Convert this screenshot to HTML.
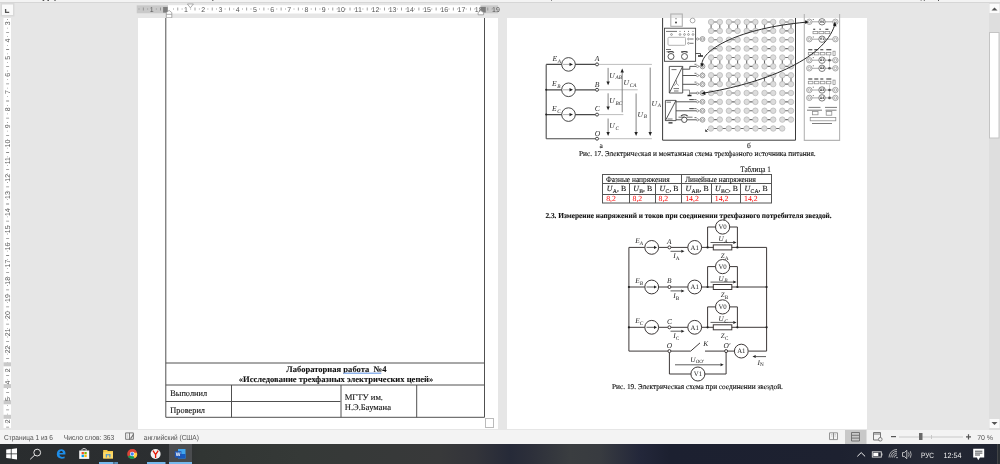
<!DOCTYPE html>
<html><head><meta charset="utf-8">
<style>
*{margin:0;padding:0;box-sizing:border-box}
html,body{width:1000px;height:464px;overflow:hidden;background:#e6e6e6;font-family:"Liberation Sans",sans-serif}
.abs{position:absolute}
svg{position:absolute;left:0;top:0;will-change:transform;text-rendering:geometricPrecision}
text[font-family^="Liberation Serif"],g[font-family^="Liberation Serif"] text{stroke:currentColor;stroke-width:0.1px}
g[style*="stroke:none"] text{stroke:none!important}
</style></head><body>
<!-- CHROME -->
<svg width="1000" height="464" viewBox="0 0 1000 464" font-family="Liberation Sans, sans-serif">
  <!-- top strip -->
  <rect x="0" y="0" width="1000" height="2" fill="#f3f3f3"/>
  <rect x="0" y="2" width="1000" height="1" fill="#d6d6d6"/>
  <rect x="42.6" y="0" width="1.6" height="1" fill="#555"/>
  <rect x="47.4" y="0" width="1.6" height="1" fill="#555"/>
  <rect x="54.2" y="0" width="1.6" height="1" fill="#777"/>
  <rect x="212" y="0" width="1.5" height="1" fill="#777"/>
  <rect x="920.6" y="0" width="1" height="1" fill="#888"/>
  <rect x="923.8" y="0" width="1" height="1" fill="#666"/>
  <rect x="938" y="0" width="1" height="1" fill="#555"/>
  <rect x="551" y="0" width="1" height="1" fill="#888"/>
  <!-- tab selector -->
  <rect x="0.5" y="3" width="14" height="13.5" fill="#d9d9d9"/>
  <rect x="2" y="4.5" width="11" height="10.5" fill="#fafafa"/>
  <path d="M5.6 9 V12.4 H9.2" fill="none" stroke="#555" stroke-width="1.3"/>
  <!-- hruler -->
<rect x="136.5" y="5.2" width="361.5" height="8.3" fill="#fff"/>
<rect x="136.5" y="5.2" width="31.5" height="8.3" fill="#c9c9c9"/>
<rect x="480.5" y="5.2" width="17.5" height="8.3" fill="#c9c9c9"/>
<path d="M138.6 8.6h0.8v0.8h-0.8z M142.9 7.5h0.8v3h-0.8z M147.3 8.6h0.8v0.8h-0.8z M155.9 8.6h0.8v0.8h-0.8z M160.2 7.5h0.8v3h-0.8z M164.5 8.6h0.8v0.8h-0.8z M173.1 8.6h0.8v0.8h-0.8z M177.4 7.5h0.8v3h-0.8z M181.7 8.6h0.8v0.8h-0.8z M190.3 8.6h0.8v0.8h-0.8z M194.6 7.5h0.8v3h-0.8z M198.9 8.6h0.8v0.8h-0.8z M207.5 8.6h0.8v0.8h-0.8z M211.8 7.5h0.8v3h-0.8z M216.1 8.6h0.8v0.8h-0.8z M224.7 8.6h0.8v0.8h-0.8z M229.1 7.5h0.8v3h-0.8z M233.4 8.6h0.8v0.8h-0.8z M242.0 8.6h0.8v0.8h-0.8z M246.3 7.5h0.8v3h-0.8z M250.6 8.6h0.8v0.8h-0.8z M259.2 8.6h0.8v0.8h-0.8z M263.5 7.5h0.8v3h-0.8z M267.8 8.6h0.8v0.8h-0.8z M276.4 8.6h0.8v0.8h-0.8z M280.7 7.5h0.8v3h-0.8z M285.0 8.6h0.8v0.8h-0.8z M293.6 8.6h0.8v0.8h-0.8z M297.9 7.5h0.8v3h-0.8z M302.2 8.6h0.8v0.8h-0.8z M310.8 8.6h0.8v0.8h-0.8z M315.1 7.5h0.8v3h-0.8z M319.5 8.6h0.8v0.8h-0.8z M328.1 8.6h0.8v0.8h-0.8z M332.4 7.5h0.8v3h-0.8z M336.7 8.6h0.8v0.8h-0.8z M345.3 8.6h0.8v0.8h-0.8z M349.6 7.5h0.8v3h-0.8z M353.9 8.6h0.8v0.8h-0.8z M362.5 8.6h0.8v0.8h-0.8z M366.8 7.5h0.8v3h-0.8z M371.1 8.6h0.8v0.8h-0.8z M379.7 8.6h0.8v0.8h-0.8z M384.0 7.5h0.8v3h-0.8z M388.3 8.6h0.8v0.8h-0.8z M396.9 8.6h0.8v0.8h-0.8z M401.2 7.5h0.8v3h-0.8z M405.6 8.6h0.8v0.8h-0.8z M414.2 8.6h0.8v0.8h-0.8z M418.5 7.5h0.8v3h-0.8z M422.8 8.6h0.8v0.8h-0.8z M431.4 8.6h0.8v0.8h-0.8z M435.7 7.5h0.8v3h-0.8z M440.0 8.6h0.8v0.8h-0.8z M448.6 8.6h0.8v0.8h-0.8z M452.9 7.5h0.8v3h-0.8z M457.2 8.6h0.8v0.8h-0.8z M465.8 8.6h0.8v0.8h-0.8z M470.1 7.5h0.8v3h-0.8z M474.4 8.6h0.8v0.8h-0.8z M483.0 8.6h0.8v0.8h-0.8z M487.4 7.5h0.8v3h-0.8z M491.7 8.6h0.8v0.8h-0.8z" fill="#8a8a8a"/>
<g font-size="7" fill="#555" text-anchor="middle"><text x="151.6" y="11.6">1</text><text x="186.0" y="11.6">1</text><text x="203.2" y="11.6">2</text><text x="220.4" y="11.6">3</text><text x="237.7" y="11.6">4</text><text x="254.9" y="11.6">5</text><text x="272.1" y="11.6">6</text><text x="289.3" y="11.6">7</text><text x="306.5" y="11.6">8</text><text x="323.8" y="11.6">9</text><text x="341.0" y="11.6">10</text><text x="358.2" y="11.6">11</text><text x="375.4" y="11.6">12</text><text x="392.6" y="11.6">13</text><text x="409.9" y="11.6">14</text><text x="427.1" y="11.6">15</text><text x="444.3" y="11.6">16</text><text x="461.5" y="11.6">17</text><text x="478.7" y="11.6">18</text><text x="496.0" y="11.6">19</text></g>
<!-- RMARK -->
<rect x="163.1" y="7" width="4.6" height="5.6" fill="#7d7d7d"/>
<rect x="480.5" y="6.9" width="5.3" height="5.6" fill="#7d7d7d"/>
<path d="M169.1 10.4 L171.8 12.6 V17.8 H166.3 V12.6Z M166.3 14.3 H171.8" fill="#fff" stroke="#8a8a8a" stroke-width="0.7"/>
<path d="M187.4 4 H193.4 L190.4 7.8Z" fill="#fff" stroke="#8a8a8a" stroke-width="0.7"/>
<path d="M480.8 10.6 L483.6 12.6 V14.8 H478.1 V12.6Z" fill="#fff" stroke="#8a8a8a" stroke-width="0.7"/>
<!-- /RMARK -->
<!-- vruler -->
<rect x="3.5" y="18" width="7.5" height="410" fill="#fff"/>
<path d="M7.2 19.1h0.8v0.8h-0.8z M7.2 27.7h0.8v0.8h-0.8z M6.1 32.0h3v0.8h-3z M7.2 36.3h0.8v0.8h-0.8z M7.2 44.9h0.8v0.8h-0.8z M6.1 49.1h3v0.8h-3z M7.2 53.4h0.8v0.8h-0.8z M7.2 62.0h0.8v0.8h-0.8z M6.1 66.3h3v0.8h-3z M7.2 70.6h0.8v0.8h-0.8z M7.2 79.2h0.8v0.8h-0.8z M6.1 83.5h3v0.8h-3z M7.2 87.8h0.8v0.8h-0.8z M7.2 96.3h0.8v0.8h-0.8z M6.1 100.6h3v0.8h-3z M7.2 104.9h0.8v0.8h-0.8z M7.2 113.5h0.8v0.8h-0.8z M6.1 117.8h3v0.8h-3z M7.2 122.1h0.8v0.8h-0.8z M7.2 130.7h0.8v0.8h-0.8z M6.1 134.9h3v0.8h-3z M7.2 139.2h0.8v0.8h-0.8z M7.2 147.8h0.8v0.8h-0.8z M6.1 152.1h3v0.8h-3z M7.2 156.4h0.8v0.8h-0.8z M7.2 165.0h0.8v0.8h-0.8z M6.1 169.3h3v0.8h-3z M7.2 173.5h0.8v0.8h-0.8z M7.2 182.1h0.8v0.8h-0.8z M6.1 186.4h3v0.8h-3z M7.2 190.7h0.8v0.8h-0.8z M7.2 199.3h0.8v0.8h-0.8z M6.1 203.6h3v0.8h-3z M7.2 207.9h0.8v0.8h-0.8z M7.2 216.4h0.8v0.8h-0.8z M6.1 220.7h3v0.8h-3z M7.2 225.0h0.8v0.8h-0.8z M7.2 233.6h0.8v0.8h-0.8z M6.1 237.9h3v0.8h-3z M7.2 242.2h0.8v0.8h-0.8z M7.2 250.8h0.8v0.8h-0.8z M6.1 255.1h3v0.8h-3z M7.2 259.3h0.8v0.8h-0.8z M7.2 267.9h0.8v0.8h-0.8z M6.1 272.2h3v0.8h-3z M7.2 276.5h0.8v0.8h-0.8z M7.2 285.1h0.8v0.8h-0.8z M6.1 289.4h3v0.8h-3z M7.2 293.7h0.8v0.8h-0.8z M7.2 302.3h0.8v0.8h-0.8z M6.1 306.5h3v0.8h-3z M7.2 310.8h0.8v0.8h-0.8z M7.2 319.4h0.8v0.8h-0.8z M6.1 323.7h3v0.8h-3z M7.2 328.0h0.8v0.8h-0.8z M7.2 336.6h0.8v0.8h-0.8z M6.1 340.9h3v0.8h-3z M7.2 345.2h0.8v0.8h-0.8z M7.2 353.7h0.8v0.8h-0.8z M6.1 358.0h3v0.8h-3z M7.2 362.3h0.8v0.8h-0.8z M7.2 370.9h0.8v0.8h-0.8z M6.1 375.2h3v0.8h-3z M7.2 379.5h0.8v0.8h-0.8z M7.2 388.1h0.8v0.8h-0.8z M6.1 392.3h3v0.8h-3z M7.2 396.6h0.8v0.8h-0.8z M7.2 405.2h0.8v0.8h-0.8z M6.1 409.5h3v0.8h-3z M7.2 413.8h0.8v0.8h-0.8z M7.2 422.4h0.8v0.8h-0.8z M6.1 426.7h3v0.8h-3z" fill="#8a8a8a"/>
<g font-size="7" fill="#555" text-anchor="middle"><text transform="translate(10.2 23.4) rotate(-90)">3</text><text transform="translate(10.2 40.6) rotate(-90)">4</text><text transform="translate(10.2 57.7) rotate(-90)">5</text><text transform="translate(10.2 74.9) rotate(-90)">6</text><text transform="translate(10.2 92.0) rotate(-90)">7</text><text transform="translate(10.2 109.2) rotate(-90)">8</text><text transform="translate(10.2 126.4) rotate(-90)">9</text><text transform="translate(10.2 143.5) rotate(-90)">10</text><text transform="translate(10.2 160.7) rotate(-90)">11</text><text transform="translate(10.2 177.8) rotate(-90)">12</text><text transform="translate(10.2 195.0) rotate(-90)">13</text><text transform="translate(10.2 212.2) rotate(-90)">14</text><text transform="translate(10.2 229.3) rotate(-90)">15</text><text transform="translate(10.2 246.5) rotate(-90)">16</text><text transform="translate(10.2 263.6) rotate(-90)">17</text><text transform="translate(10.2 280.8) rotate(-90)">18</text><text transform="translate(10.2 298.0) rotate(-90)">19</text><text transform="translate(10.2 315.1) rotate(-90)">20</text><text transform="translate(10.2 332.3) rotate(-90)">21</text><text transform="translate(10.2 349.4) rotate(-90)">22</text></g>

<!-- VBLK -->
<g fill="#c9c9c9"><rect x="3.5" y="362.3" width="7.5" height="4"/><rect x="3.5" y="384.1" width="7.5" height="4"/><rect x="3.5" y="400.2" width="7.5" height="4.1"/><rect x="3.5" y="414.8" width="7.5" height="4"/></g>
<g font-size="7" fill="#555" text-anchor="middle"><text transform="translate(10.2 370.3) rotate(-90)">2</text><text transform="translate(10.2 399.1) rotate(-90)">5</text><text transform="translate(10.2 421.2) rotate(-90)">2</text><text transform="translate(10.2 382.5) rotate(-90)">4</text></g>
<!-- /VBLK -->
  <!-- scrollbar -->
  <rect x="989" y="3" width="11" height="427" fill="#dedede"/>
  <rect x="989.5" y="4" width="10" height="9" fill="#fbfbfb"/>
  <path d="M991.5 10.5 L994.5 7.5 L997.5 10.5Z" fill="#555"/>
  <rect x="989.5" y="32.5" width="9.5" height="105.5" fill="#fff" stroke="#c4c4c4" stroke-width="1"/>
  <rect x="989.5" y="419" width="10" height="9" fill="#fbfbfb"/>
  <path d="M991.5 422 L994.5 425 L997.5 422Z" fill="#555"/>

<!-- PAGE 1 -->
<rect x="138" y="18" width="360" height="411" fill="#fff"/>
<g fill="none" stroke="#505050" stroke-width="1">
  <path d="M165.8 18 V417.3 H484.5 V18"/>
  <path d="M165.8 363 H484.5 M165.8 385 H484.5 M165.8 401.5 H340.5"/>
  <path d="M231.5 385 V417.3 M341 385 V417.3 M416.7 385 V417.3"/>
</g>
<rect x="485.5" y="418.5" width="8" height="9" fill="#fff" stroke="#bbb" stroke-width="1"/>
<g font-family="Liberation Serif, serif" fill="#111">
  <text x="286.3" y="371.8" font-size="8.6" font-weight="bold" textLength="100.2" lengthAdjust="spacingAndGlyphs">Лабораторная работа&#160;&#160;№4</text>
  <text x="238.8" y="381.9" font-size="8.6" font-weight="bold" textLength="194.5" lengthAdjust="spacingAndGlyphs">«Исследование трехфазных электрических цепей»</text>
  <text x="170.3" y="396.3" font-size="8.6" textLength="36.8" lengthAdjust="spacingAndGlyphs">Выполнил</text>
  <text x="170.3" y="412.7" font-size="8.6" textLength="34.7" lengthAdjust="spacingAndGlyphs">Проверил</text>
  <text x="344.7" y="400" font-size="8.6">МГТУ им.</text>
  <text x="344.7" y="409.8" font-size="8.6">Н.Э.Баумана</text>
</g>
<path d="M343.4 373.3 H381.3" stroke="#8fb4ec" stroke-width="1.5"/>
<!-- PAGE 2 -->
<rect x="507" y="18" width="360" height="411" fill="#fff"/>
<!-- FIG 17a -->
<g fill="none" stroke-linecap="butt">
  <path d="M546.2 64.4 V138.7" stroke="#555" stroke-width="1.15"/>
  <path d="M546.2 64.4 H561.7 M575.3 64.4 H595.4 M546.2 89.8 H561.7 M575.3 89.8 H595.4 M546.2 114.6 H561.7 M575.3 114.6 H595.4 M546.2 138.7 H595.4" stroke="#484848" stroke-width="1.15"/>
  <path d="M598.6 64.4 H651.9 M598.6 89.8 H637.7 M598.6 114.6 H623.4 M598.6 138.7 H651.9" stroke="#bdbdbd" stroke-width="1"/>
  <g stroke="#333" stroke-width="0.9">
    <circle cx="568.5" cy="64.4" r="6.8"/>
    <circle cx="568.5" cy="89.8" r="6.8"/>
    <circle cx="568.5" cy="114.6" r="6.8"/>
  </g>
  <g stroke="#999" stroke-width="0.8">
    <path d="M563 64.4 H570 M563 89.8 H570 M563 114.6 H570"/>
  </g>
  <g stroke="#333" stroke-width="0.9" fill="#fff">
    <circle cx="597" cy="64.4" r="1.5"/>
    <circle cx="597" cy="89.8" r="1.5"/>
    <circle cx="597" cy="114.6" r="1.5"/>
    <circle cx="597" cy="138.7" r="1.5"/>
  </g>
  <g stroke="#777" stroke-width="0.9">
    <path d="M608.1 67.9 V83 M608.1 93.3 V108 M608.1 118.5 V133.5 M622.2 71 V112.3 M636.1 93.5 V133.5 M650.2 67.6 V133.5"/>
  </g>
</g>
<g fill="#222">
  <path d="M569.5 62.7 L573 64.4 L569.5 66.1Z M569.5 88.1 L573 89.8 L569.5 91.5Z M569.5 112.9 L573 114.6 L569.5 116.3Z"/>
  <path d="M606.4 81.4 L609.8 81.4 L608.1 85.3Z M606.4 106.4 L609.8 106.4 L608.1 110.3Z M606.4 132 L609.8 132 L608.1 135.9Z M634.4 132 L637.8 132 L636.1 135.9Z M648.5 132 L651.9 132 L650.2 135.9Z M620.5 72.4 L623.9 72.4 L622.2 68.5Z"/>
  <circle cx="546.2" cy="89.8" r="1"/>
  <circle cx="546.2" cy="114.6" r="1"/>
</g>
<g font-family="Liberation Serif, serif" font-style="italic" fill="#2a2a2a" style="stroke:none">
  <text x="552.5" y="61" font-size="7.6">E<tspan font-size="5.2" dy="1.9" dx="0.7">A</tspan></text>
  <text x="552" y="86.2" font-size="7.6">E<tspan font-size="5.2" dy="1.9" dx="0.7">B</tspan></text>
  <text x="552" y="111" font-size="7.6">E<tspan font-size="5.2" dy="1.9" dx="0.7">C</tspan></text>
  <text x="594.8" y="61.2" font-size="7.6">A</text>
  <text x="594.8" y="86.6" font-size="7.6">B</text>
  <text x="594.8" y="111.4" font-size="7.6">C</text>
  <text x="594.8" y="135.5" font-size="7.6">O</text>
  <text x="609.3" y="77.5" font-size="7.6">U<tspan font-size="5.2" dy="1.9" dx="0.7">AB</tspan></text>
  <text x="623.5" y="85" font-size="7.6">U<tspan font-size="5.2" dy="1.9" dx="0.7">CA</tspan></text>
  <text x="609.3" y="102.8" font-size="7.6">U<tspan font-size="5.2" dy="1.9" dx="0.7">BC</tspan></text>
  <text x="609.3" y="127.6" font-size="7.6">U<tspan font-size="5.2" dy="1.9" dx="0.7">C</tspan></text>
  <text x="637.5" y="116.5" font-size="7.6">U<tspan font-size="5.2" dy="1.9" dx="0.7">B</tspan></text>
  <text x="651.5" y="105.5" font-size="7.6">U<tspan font-size="5.2" dy="1.9" dx="0.7">A</tspan></text>
</g>
<text x="599.5" y="148" font-family="Liberation Serif, serif" font-size="7.5" fill="#222">а</text>
<!-- FIG17B -->
<g fill="none">
<path d="M662.6 18 V140.2 H795.5 V18" stroke="#3a3a3a" stroke-width="1"/>
<path d="M711.10 22.00H719.80V30.88H711.10Z M728.90 22.00H737.60V30.88H728.90Z M746.70 22.00H755.40V30.88H746.70Z M764.50 22.00H773.20V30.88H764.50Z M782.30 22.00H791.00V30.88H782.30Z M711.10 39.75H719.80 M728.90 39.75H737.60 M746.70 39.75H755.40 M764.50 39.75H773.20 M782.30 39.75H791.00 M711.10 48.62H719.80 M728.90 48.62H737.60 M746.70 48.62H755.40 M764.50 48.62H773.20 M782.30 48.62H791.00 M711.10 57.50H719.80V66.38H711.10Z M728.90 57.50H737.60V66.38H728.90Z M746.70 57.50H755.40V66.38H746.70Z M764.50 57.50H773.20V66.38H764.50Z M782.30 57.50H791.00V66.38H782.30Z M711.10 75.25H719.80V84.12H711.10Z M728.90 75.25H737.60V84.12H728.90Z M746.70 75.25H755.40V84.12H746.70Z M764.50 75.25H773.20V84.12H764.50Z M782.30 75.25H791.00V84.12H782.30Z M711.10 93.00H719.80 M728.90 93.00H737.60 M746.70 93.00H755.40 M764.50 93.00H773.20 M782.30 93.00H791.00 M711.10 101.88H719.80 M728.90 101.88H737.60 M746.70 101.88H755.40 M764.50 101.88H773.20 M782.30 101.88H791.00 M711.10 110.75H719.80 M728.90 110.75H737.60 M746.70 110.75H755.40 M764.50 110.75H773.20 M782.30 110.75H791.00 M711.10 119.62H719.80 M728.90 119.62H737.60 M746.70 119.62H755.40 M764.50 119.62H773.20 M782.30 119.62H791.00 M710.90 128.50H782.18" stroke="#6a6a6a" stroke-width="1.1"/>
<g fill="#dcdcdc" stroke="#b5b5b5" stroke-width="0.7"><circle cx="711.10" cy="22.00" r="2.75"/><circle cx="711.10" cy="30.88" r="2.75"/><circle cx="719.80" cy="22.00" r="2.75"/><circle cx="719.80" cy="30.88" r="2.75"/><circle cx="728.90" cy="22.00" r="2.75"/><circle cx="728.90" cy="30.88" r="2.75"/><circle cx="737.60" cy="22.00" r="2.75"/><circle cx="737.60" cy="30.88" r="2.75"/><circle cx="746.70" cy="22.00" r="2.75"/><circle cx="746.70" cy="30.88" r="2.75"/><circle cx="755.40" cy="22.00" r="2.75"/><circle cx="755.40" cy="30.88" r="2.75"/><circle cx="764.50" cy="22.00" r="2.75"/><circle cx="764.50" cy="30.88" r="2.75"/><circle cx="773.20" cy="22.00" r="2.75"/><circle cx="773.20" cy="30.88" r="2.75"/><circle cx="782.30" cy="22.00" r="2.75"/><circle cx="782.30" cy="30.88" r="2.75"/><circle cx="791.00" cy="22.00" r="2.75"/><circle cx="791.00" cy="30.88" r="2.75"/><circle cx="711.10" cy="39.75" r="2.75"/><circle cx="719.80" cy="39.75" r="2.75"/><circle cx="728.90" cy="39.75" r="2.75"/><circle cx="737.60" cy="39.75" r="2.75"/><circle cx="746.70" cy="39.75" r="2.75"/><circle cx="755.40" cy="39.75" r="2.75"/><circle cx="764.50" cy="39.75" r="2.75"/><circle cx="773.20" cy="39.75" r="2.75"/><circle cx="782.30" cy="39.75" r="2.75"/><circle cx="791.00" cy="39.75" r="2.75"/><circle cx="711.10" cy="48.62" r="2.75"/><circle cx="719.80" cy="48.62" r="2.75"/><circle cx="728.90" cy="48.62" r="2.75"/><circle cx="737.60" cy="48.62" r="2.75"/><circle cx="746.70" cy="48.62" r="2.75"/><circle cx="755.40" cy="48.62" r="2.75"/><circle cx="764.50" cy="48.62" r="2.75"/><circle cx="773.20" cy="48.62" r="2.75"/><circle cx="782.30" cy="48.62" r="2.75"/><circle cx="791.00" cy="48.62" r="2.75"/><circle cx="711.10" cy="57.50" r="2.75"/><circle cx="711.10" cy="66.38" r="2.75"/><circle cx="719.80" cy="57.50" r="2.75"/><circle cx="719.80" cy="66.38" r="2.75"/><circle cx="728.90" cy="57.50" r="2.75"/><circle cx="728.90" cy="66.38" r="2.75"/><circle cx="737.60" cy="57.50" r="2.75"/><circle cx="737.60" cy="66.38" r="2.75"/><circle cx="746.70" cy="57.50" r="2.75"/><circle cx="746.70" cy="66.38" r="2.75"/><circle cx="755.40" cy="57.50" r="2.75"/><circle cx="755.40" cy="66.38" r="2.75"/><circle cx="764.50" cy="57.50" r="2.75"/><circle cx="764.50" cy="66.38" r="2.75"/><circle cx="773.20" cy="57.50" r="2.75"/><circle cx="773.20" cy="66.38" r="2.75"/><circle cx="782.30" cy="57.50" r="2.75"/><circle cx="782.30" cy="66.38" r="2.75"/><circle cx="791.00" cy="57.50" r="2.75"/><circle cx="791.00" cy="66.38" r="2.75"/><circle cx="711.10" cy="75.25" r="2.75"/><circle cx="711.10" cy="84.12" r="2.75"/><circle cx="719.80" cy="75.25" r="2.75"/><circle cx="719.80" cy="84.12" r="2.75"/><circle cx="728.90" cy="75.25" r="2.75"/><circle cx="728.90" cy="84.12" r="2.75"/><circle cx="737.60" cy="75.25" r="2.75"/><circle cx="737.60" cy="84.12" r="2.75"/><circle cx="746.70" cy="75.25" r="2.75"/><circle cx="746.70" cy="84.12" r="2.75"/><circle cx="755.40" cy="75.25" r="2.75"/><circle cx="755.40" cy="84.12" r="2.75"/><circle cx="764.50" cy="75.25" r="2.75"/><circle cx="764.50" cy="84.12" r="2.75"/><circle cx="773.20" cy="75.25" r="2.75"/><circle cx="773.20" cy="84.12" r="2.75"/><circle cx="782.30" cy="75.25" r="2.75"/><circle cx="782.30" cy="84.12" r="2.75"/><circle cx="791.00" cy="75.25" r="2.75"/><circle cx="791.00" cy="84.12" r="2.75"/><circle cx="711.10" cy="93.00" r="2.75"/><circle cx="719.80" cy="93.00" r="2.75"/><circle cx="728.90" cy="93.00" r="2.75"/><circle cx="737.60" cy="93.00" r="2.75"/><circle cx="746.70" cy="93.00" r="2.75"/><circle cx="755.40" cy="93.00" r="2.75"/><circle cx="764.50" cy="93.00" r="2.75"/><circle cx="773.20" cy="93.00" r="2.75"/><circle cx="782.30" cy="93.00" r="2.75"/><circle cx="791.00" cy="93.00" r="2.75"/><circle cx="711.10" cy="101.88" r="2.75"/><circle cx="719.80" cy="101.88" r="2.75"/><circle cx="728.90" cy="101.88" r="2.75"/><circle cx="737.60" cy="101.88" r="2.75"/><circle cx="746.70" cy="101.88" r="2.75"/><circle cx="755.40" cy="101.88" r="2.75"/><circle cx="764.50" cy="101.88" r="2.75"/><circle cx="773.20" cy="101.88" r="2.75"/><circle cx="782.30" cy="101.88" r="2.75"/><circle cx="791.00" cy="101.88" r="2.75"/><circle cx="711.10" cy="110.75" r="2.75"/><circle cx="719.80" cy="110.75" r="2.75"/><circle cx="728.90" cy="110.75" r="2.75"/><circle cx="737.60" cy="110.75" r="2.75"/><circle cx="746.70" cy="110.75" r="2.75"/><circle cx="755.40" cy="110.75" r="2.75"/><circle cx="764.50" cy="110.75" r="2.75"/><circle cx="773.20" cy="110.75" r="2.75"/><circle cx="782.30" cy="110.75" r="2.75"/><circle cx="791.00" cy="110.75" r="2.75"/><circle cx="711.10" cy="119.62" r="2.75"/><circle cx="719.80" cy="119.62" r="2.75"/><circle cx="728.90" cy="119.62" r="2.75"/><circle cx="737.60" cy="119.62" r="2.75"/><circle cx="746.70" cy="119.62" r="2.75"/><circle cx="755.40" cy="119.62" r="2.75"/><circle cx="764.50" cy="119.62" r="2.75"/><circle cx="773.20" cy="119.62" r="2.75"/><circle cx="782.30" cy="119.62" r="2.75"/><circle cx="791.00" cy="119.62" r="2.75"/><circle cx="710.90" cy="128.50" r="2.75"/><circle cx="719.81" cy="128.50" r="2.75"/><circle cx="728.72" cy="128.50" r="2.75"/><circle cx="737.63" cy="128.50" r="2.75"/><circle cx="746.54" cy="128.50" r="2.75"/><circle cx="755.45" cy="128.50" r="2.75"/><circle cx="764.36" cy="128.50" r="2.75"/><circle cx="773.27" cy="128.50" r="2.75"/><circle cx="782.18" cy="128.50" r="2.75"/></g>
</g>
<g fill="none" stroke="#444" stroke-width="0.9">
  <rect x="664.5" y="28.2" width="31.1" height="33.1"/>
  <path d="M669.3 93 V66.4 H682.7 V93 Z M669.3 93 L682.7 66.4"/>
  <path d="M665.4 120.6 V100.4 H676 V120.6 Z M665.4 120.6 L676 100.4"/>
  <path d="M682.7 69.2 H689.8 V66.4 H696.3 M682.7 75.5 H696.3 M682.7 84.3 H696.3 M689.5 93.1 H699.5 M695.6 53.5 H700.5 V56"/>
  <path d="M676 101.8 H696.3 M676 110.8 H696.3 M676 119.8 H681.6 M687 119.8 H696.3"/>
  <circle cx="671" cy="56.5" r="3"/><circle cx="684.5" cy="56.5" r="3"/>
  <circle cx="684.3" cy="119.8" r="2.7"/>
  <path d="M668 52.5 Q671 50.5 674 52.5 M681.5 52.5 Q684.5 50.5 687.5 52.5 M681 116 Q684.3 113.5 687.6 116" stroke-width="1.2"/>
</g>
<g fill="none" stroke="#777" stroke-width="0.8">
  <path d="M682.7 90 H689.5 V95"/>
</g>
<path d="M698 56 H703 M687.5 95.5 H691.5 M668.5 122.8 H672.5" stroke="#222" stroke-width="1.3"/>
<g fill="none" stroke="#aaa" stroke-width="0.9">
  <rect x="670.8" y="14" width="11.5" height="12.3" stroke="#b0b0b0" stroke-width="1.1"/>
  <circle cx="692.6" cy="20.5" r="2.4" stroke-width="1"/>
  <rect x="668" y="37.3" width="17.5" height="8" rx="1"/>
</g>
<g fill="#fff" stroke="#666" stroke-width="0.6">
  <circle cx="671.5" cy="34.5" r="0.9"/><circle cx="680" cy="34.5" r="0.9"/><circle cx="684.5" cy="34.5" r="0.9"/><circle cx="688.5" cy="34.5" r="0.9"/><circle cx="693" cy="34.5" r="0.9"/>
  <circle cx="688.5" cy="39" r="0.9"/><circle cx="688.5" cy="43.3" r="0.9"/>
</g>
<path d="M666 31.4 H677 M679.5 31.4h1 M684 31.4h1 M688 31.4h1 M692.5 31.4h1 M690 39h3.5 M690 43.3h3.5 M666 49.5h5 M666.5 51.7h6.5 M681 51.7h6.5 M690 99.6h4.5 M690 108.6h4.5 M678.5 117.2h6 M686.5 117.2h6 M671.5 69.6h5 M673.5 88.6h5.5 M674 91h4.5 M666.5 102.2h4.5 M689 99.6h4.5 M689 108.6h4.5 M694.5 64.3h2 M694.5 73.3h2 M694.5 82.1h2 M694.5 99.6h2 M694.5 108.6h2 M694.5 117.6h2 M701.8 91h1 M701.8 73h1 M701.8 81.8h1 M667.5 119h5" stroke="#444" stroke-width="0.75"/><path d="M676.5 80.3 V83.4 L674.2 85.6 M676.5 83.4 L678.8 85.6" fill="none" stroke="#555" stroke-width="0.6"/>
<circle cx="676" cy="22.5" r="0.9" fill="#333"/><path d="M676 18 v1.3" stroke="#333" stroke-width="0.7"/>

<g fill="#fff" stroke="#7a7a7a" stroke-width="0.75"><circle cx="697.5" cy="39" r="1.1"/><circle cx="702.5" cy="39" r="2.4"/><circle cx="702.5" cy="39" r="1.1" stroke-width="0.6"/><circle cx="697.5" cy="66.4" r="1.1"/><circle cx="702.5" cy="66.4" r="2.4"/><circle cx="702.5" cy="66.4" r="1.1" stroke-width="0.6"/><circle cx="697.5" cy="75.5" r="1.1"/><circle cx="702.5" cy="75.5" r="2.4"/><circle cx="702.5" cy="75.5" r="1.1" stroke-width="0.6"/><circle cx="697.5" cy="84.3" r="1.1"/><circle cx="702.5" cy="84.3" r="2.4"/><circle cx="702.5" cy="84.3" r="1.1" stroke-width="0.6"/><circle cx="697.5" cy="93.1" r="1.1"/><circle cx="702.5" cy="93.1" r="2.4"/><circle cx="702.5" cy="93.1" r="1.1" stroke-width="0.6"/><circle cx="697.5" cy="101.8" r="1.1"/><circle cx="702.5" cy="101.8" r="2.4"/><circle cx="702.5" cy="101.8" r="1.1" stroke-width="0.6"/><circle cx="697.5" cy="110.8" r="1.1"/><circle cx="702.5" cy="110.8" r="2.4"/><circle cx="702.5" cy="110.8" r="1.1" stroke-width="0.6"/><circle cx="697.5" cy="119.8" r="1.1"/><circle cx="702.5" cy="119.8" r="2.4"/><circle cx="702.5" cy="119.8" r="1.1" stroke-width="0.6"/></g>
<path d="M698.6 39 H700.1 M698.6 66.4 H700.1 M698.6 75.5 H700.1 M698.6 84.3 H700.1 M698.6 101.8 H700.1 M698.6 110.8 H700.1 M698.6 119.8 H700.1" stroke="#888" stroke-width="0.6"/>
<path d="M804.3 14 V140.4 H839.6 V14" fill="none" stroke="#b4b4b4" stroke-width="1.1"/>
<g fill="none" stroke="#8a8a8a" stroke-width="0.75"><path d="M812 21.8H818.8 M825.2 21.8H832.7"/><circle cx="809.3" cy="21.8" r="2.7"/><circle cx="809.3" cy="21.8" r="1.3" stroke-width="0.6"/><circle cx="835.4" cy="21.8" r="2.7"/><circle cx="835.4" cy="21.8" r="1.3" stroke-width="0.6"/><circle cx="822" cy="21.8" r="3.2" stroke="#606060" stroke-width="0.8"/><path d="M812 39.2H818.8 M825.2 39.2H832.7"/><circle cx="809.3" cy="39.2" r="2.7"/><circle cx="809.3" cy="39.2" r="1.3" stroke-width="0.6"/><circle cx="835.4" cy="39.2" r="2.7"/><circle cx="835.4" cy="39.2" r="1.3" stroke-width="0.6"/><circle cx="822" cy="39.2" r="3.2" stroke="#606060" stroke-width="0.8"/><path d="M812 60.2H818.8 M825.2 60.2H832.7"/><circle cx="809.3" cy="60.2" r="2.7"/><circle cx="809.3" cy="60.2" r="1.3" stroke-width="0.6"/><circle cx="835.4" cy="60.2" r="2.7"/><circle cx="835.4" cy="60.2" r="1.3" stroke-width="0.6"/><circle cx="822" cy="60.2" r="3.2" stroke="#606060" stroke-width="0.8"/><path d="M812 68.3H818.8 M825.2 68.3H832.7"/><circle cx="809.3" cy="68.3" r="2.7"/><circle cx="809.3" cy="68.3" r="1.3" stroke-width="0.6"/><circle cx="835.4" cy="68.3" r="2.7"/><circle cx="835.4" cy="68.3" r="1.3" stroke-width="0.6"/><circle cx="822" cy="68.3" r="3.2" stroke="#606060" stroke-width="0.8"/><path d="M812 90H818.8 M825.2 90H832.7"/><circle cx="809.3" cy="90" r="2.7"/><circle cx="809.3" cy="90" r="1.3" stroke-width="0.6"/><circle cx="835.4" cy="90" r="2.7"/><circle cx="835.4" cy="90" r="1.3" stroke-width="0.6"/><circle cx="822" cy="90" r="3.2" stroke="#606060" stroke-width="0.8"/><path d="M812 97.9H818.8 M825.2 97.9H832.7"/><circle cx="809.3" cy="97.9" r="2.7"/><circle cx="809.3" cy="97.9" r="1.3" stroke-width="0.6"/><circle cx="835.4" cy="97.9" r="2.7"/><circle cx="835.4" cy="97.9" r="1.3" stroke-width="0.6"/><circle cx="822" cy="97.9" r="3.2" stroke="#606060" stroke-width="0.8"/><path d="M829.5 55 V68.3 M829.5 84.5 V98.1" stroke="#aaa" stroke-width="0.6"/><rect x="813" y="31.6" width="4.8" height="2.1"/><rect x="819" y="31.6" width="4.8" height="2.1"/><rect x="825" y="31.6" width="4.8" height="2.1"/><rect x="808.3" y="52.4" width="4.6" height="2.5"/><rect x="814.3" y="52.4" width="4.6" height="2.5"/><rect x="820.3" y="52.4" width="4.6" height="2.5"/><rect x="826.3" y="52.4" width="4.6" height="2.5"/><rect x="833" y="51.199999999999996" width="2.1" height="4.4"/><rect x="808.3" y="81.3" width="4.6" height="2.5"/><rect x="814.3" y="81.3" width="4.6" height="2.5"/><rect x="820.3" y="81.3" width="4.6" height="2.5"/><rect x="826.3" y="81.3" width="4.6" height="2.5"/><rect x="833" y="80.1" width="2.1" height="4.4"/><rect x="812.6" y="111.6" width="5.4" height="3.2"/><rect x="826.2" y="111.6" width="5.6" height="3.6"/><rect x="810.2" y="117.4" width="25.6" height="3.4"/></g>
<g fill="#555"><circle cx="829.5" cy="60.2" r="1.3"/><circle cx="829.5" cy="68.3" r="1.3"/><circle cx="829.5" cy="90" r="1.3"/><circle cx="829.5" cy="97.9" r="1.3"/></g>
<g font-family="Liberation Sans, sans-serif" font-size="3.6" font-weight="bold" fill="#222" text-anchor="middle"><text x="822" y="22.900000000000002">V0</text><text x="822" y="40.300000000000004">V1</text><text x="822" y="61.300000000000004">A1</text><text x="822" y="69.39999999999999">A2</text><text x="822" y="91.1">A3</text><text x="822" y="99.0">A4</text></g>
<path d="M813.2 29.3h2 M819.4 29.3h1.4 M825.4 29.3h3 M808.3 49.8h4 M814.3 49.8h4 M820.3 49.8h3 M826.3 49.8h5 M808.3 79h4 M814.3 79h4 M820.3 79h3 M826.3 79h5" stroke="#2a2a2a" stroke-width="1.1"/>
<path d=" M808.5 107.4h12 M825 107.4h12 M807 110.2h15 M825.5 110.2h11 M812 123.5h20" stroke="#444" stroke-width="0.7"/>
<path d="M812.8 19.5h1 M812.8 37h1 M812.8 57.6h1 M812.8 65.8h1 M812.8 87.2h1 M812.8 95.6h1" stroke="#444" stroke-width="0.8"/>
<path d="M701.9 64 C702.6 49.3, 739 28.2, 806 22.2" fill="none" stroke="#2a2a2a" stroke-width="1"/>
<path d="M703 93.2 C761.1 83.7, 823.9 60.5, 834.7 25" fill="none" stroke="#2a2a2a" stroke-width="1"/>
<path d="M808.6 22 L805 20.3 L805.3 23.9Z M835.1 21.6 L832.9 25.6 L836.5 26.4Z M702 67.2 L700.3 63.3 L703.8 63.4Z M701.3 93.4 L705 91.5 L705.5 95Z" fill="#1a1a1a"/>
<path d="M706 131 L708 129 M705.5 129.5 V131.5 H707.5" stroke="#333" stroke-width="0.8" fill="none"/>
<text x="747" y="148" font-family="Liberation Serif, serif" font-size="7.5" fill="#222">б</text>
<!-- /FIG17B -->
<!-- FIG19 -->
<g font-family="Liberation Serif, serif" fill="#111">
  <text x="579" y="156" font-size="7.4" style="stroke-width:0.12px" textLength="236.7" lengthAdjust="spacingAndGlyphs">Рис. 17. Электрическая и монтажная схема трехфазного источника питания.</text>
  <text x="740.3" y="172.3" font-size="8.4" textLength="30.4" lengthAdjust="spacingAndGlyphs">Таблица 1</text>
</g>
<!-- table -->
<g fill="none" stroke="#555" stroke-width="1">
  <rect x="602.5" y="174.5" width="169" height="28.5"/>
  <path d="M602.5 183.5 H771.5 M602.5 194.5 H771.5"/>
  <path d="M681.5 174.5 V203 M629.5 183.5 V203 M655.5 183.5 V203 M711.5 183.5 V203 M740.5 183.5 V203"/>
</g>
<g font-family="Liberation Serif, serif" font-size="7.8" fill="#111">
  <text x="606" y="181.6" textLength="63.6" lengthAdjust="spacingAndGlyphs">Фазные напряжения</text>
  <text x="685.2" y="181.6" textLength="70.7" lengthAdjust="spacingAndGlyphs">Линейные напряжения</text>
  <text x="606.8" y="190.7"><tspan font-style="italic">U</tspan><tspan font-size="5.8" dy="2.1" dx="0.4">A</tspan><tspan dy="-2.1">, В</tspan></text>
  <text x="633.2" y="190.7"><tspan font-style="italic">U</tspan><tspan font-size="5.8" dy="2.1" dx="0.4">B</tspan><tspan dy="-2.1">, В</tspan></text>
  <text x="659.5" y="190.7"><tspan font-style="italic">U</tspan><tspan font-size="5.8" dy="2.1" dx="0.4">C</tspan><tspan dy="-2.1">, В</tspan></text>
  <text x="685.5" y="190.7"><tspan font-style="italic">U</tspan><tspan font-size="5.8" dy="2.1" dx="0.4">AB</tspan><tspan dy="-2.1">, В</tspan></text>
  <text x="715" y="190.7"><tspan font-style="italic">U</tspan><tspan font-size="5.8" dy="2.1" dx="0.4">BC</tspan><tspan dy="-2.1">, В</tspan></text>
  <text x="744.5" y="190.7"><tspan font-style="italic">U</tspan><tspan font-size="5.8" dy="2.1" dx="0.4">CA</tspan><tspan dy="-2.1">, В</tspan></text>
</g>
<g font-family="Liberation Serif, serif" font-size="7.8" fill="#ff0000" style="stroke:none">
  <text x="606.2" y="200.6">8,2</text>
  <text x="632.5" y="200.6">8,2</text>
  <text x="658.5" y="200.6">8,2</text>
  <text x="685.2" y="200.6">14,2</text>
  <text x="714.8" y="200.6">14,2</text>
  <text x="744" y="200.6">14,2</text>
</g>
<text x="545.4" y="218.4" font-family="Liberation Serif, serif" font-size="7.6" font-weight="bold" fill="#111" textLength="286.2" lengthAdjust="spacingAndGlyphs">2.3. Измерение напряжений и токов при соединении трехфазного потребителя звездой.</text>
<text x="612" y="388.5" font-family="Liberation Serif, serif" font-size="7.4" style="stroke-width:0.12px" fill="#111" textLength="170.9" lengthAdjust="spacingAndGlyphs">Рис. 19. Электрическая схема при соединении звездой.</text>

<!-- /FIG19 -->
<!-- FIG19C -->
<g fill="none" stroke="#3d3838" stroke-width="1">
<path d="M628.9 247.4 V351.1 H667.8 M766.6 247.4 V351.1 H748.5"/>
<path d="M628.9 247.4 H644.8 M658.6 247.4 H667.9 M670.9 247.4 H687.8 M701.6 247.4 H713.3 M731.8 247.4 H766.6"/>
<path d="M707.6 247.4 V227.0 H715.5 M729.7 227.0 H737.4 V247.4"/>
<circle cx="651.7" cy="247.4" r="6.9"/><circle cx="694.7" cy="247.4" r="6.9"/><circle cx="722.6" cy="227.0" r="7.1"/>
<rect x="713.3" y="244.9" width="18.5" height="5"/>
<circle cx="669.4" cy="247.4" r="1.5" fill="#fff"/>
<path d="M628.9 287.0 H644.8 M658.6 287.0 H667.9 M670.9 287.0 H687.8 M701.6 287.0 H713.3 M731.8 287.0 H766.6"/>
<path d="M707.6 287.0 V266.6 H715.5 M729.7 266.6 H737.4 V287.0"/>
<circle cx="651.7" cy="287.0" r="6.9"/><circle cx="694.7" cy="287.0" r="6.9"/><circle cx="722.6" cy="266.6" r="7.1"/>
<rect x="713.3" y="284.5" width="18.5" height="5"/>
<circle cx="669.4" cy="287.0" r="1.5" fill="#fff"/>
<path d="M628.9 327.3 H644.8 M658.6 327.3 H667.9 M670.9 327.3 H687.8 M701.6 327.3 H713.3 M731.8 327.3 H766.6"/>
<path d="M707.6 327.3 V306.90000000000003 H715.5 M729.7 306.90000000000003 H737.4 V327.3"/>
<circle cx="651.7" cy="327.3" r="6.9"/><circle cx="694.7" cy="327.3" r="6.9"/><circle cx="722.6" cy="306.90000000000003" r="7.1"/>
<rect x="713.3" y="324.8" width="18.5" height="5"/>
<circle cx="669.4" cy="327.3" r="1.5" fill="#fff"/>
<path d="M670.9 351.1 H690.7 L700 342.9 M705 351.1 H724.6 M727.6 351.1 H734.4"/>
<circle cx="669.4" cy="351.1" r="1.5" fill="#fff"/><circle cx="726.1" cy="351.1" r="1.5" fill="#fff"/>
<circle cx="741.3" cy="351.1" r="6.9"/>
<path d="M669.4 352.6 V374 H690.9 M704.9 374 H726.1 V352.6"/>
<circle cx="697.9" cy="374" r="7"/>
</g>
<g fill="none" stroke="#333" stroke-width="0.8">
<path d="M646.5 247.4 H654 M670.5 251.3 H681.5 M710.5 242.5 H733.5"/>
<path d="M646.5 287.0 H654 M670.5 290.9 H681.5 M710.5 282.1 H733.5"/>
<path d="M646.5 327.3 H654 M670.5 331.2 H681.5 M710.5 322.40000000000003 H733.5"/>
<path d="M675 364.8 H720.5 M766 356.6 H755.5"/>
</g>
<g fill="#222">
<path d="M654 245.8 L657 247.4 L654 249.0Z M681.3 249.8 L684.5 251.3 L681.3 252.8Z M733.3 241.0 L736.5 242.5 L733.3 244.0Z"/>
<path d="M654 285.4 L657 287.0 L654 288.6Z M681.3 289.4 L684.5 290.9 L681.3 292.4Z M733.3 280.6 L736.5 282.1 L733.3 283.6Z"/>
<path d="M654 325.7 L657 327.3 L654 328.90000000000003Z M681.3 329.7 L684.5 331.2 L681.3 332.7Z M733.3 320.90000000000003 L736.5 322.40000000000003 L733.3 323.90000000000003Z"/>
<path d="M720.5 363.3 L723.7 364.8 L720.5 366.3Z M755.7 355.1 L752.5 356.6 L755.7 358.1Z"/>
<circle cx="707.6" cy="247.4" r="1.1"/><circle cx="737.4" cy="247.4" r="1.1"/>
<circle cx="707.6" cy="287.0" r="1.1"/><circle cx="737.4" cy="287.0" r="1.1"/>
<circle cx="707.6" cy="327.3" r="1.1"/><circle cx="737.4" cy="327.3" r="1.1"/>
<circle cx="628.9" cy="287.0" r="1.1"/><circle cx="766.6" cy="287.0" r="1.1"/>
<circle cx="628.9" cy="327.3" r="1.1"/><circle cx="766.6" cy="327.3" r="1.1"/>
</g>
<g font-family="Liberation Serif, serif" fill="#222" style="stroke:none">
<text x="635.3" y="243.4" font-size="7.4" font-style="italic">E<tspan font-size="5.2" dy="1.6">A</tspan></text>
<text x="667" y="243.8" font-size="7.4" font-style="italic">A</text>
<text x="694.7" y="249.70000000000002" font-size="6.8" text-anchor="middle">A1</text>
<text x="722.6" y="229.3" font-size="6.8" text-anchor="middle">V0</text>
<text x="718.4" y="240.9" font-size="7.2" font-style="italic">U<tspan font-size="5.4" dy="1.9" dx="0.6">A</tspan></text>
<text x="720.8" y="257.8" font-size="6.8" font-style="italic">Z<tspan font-size="5.4" dy="1.8" dx="0.2" font-style="normal">A</tspan></text>
<text x="673.3" y="258.1" font-size="7.4" font-style="italic">I<tspan font-size="5.2" dy="1.8" font-style="normal">A</tspan></text>
<text x="635.3" y="283.0" font-size="7.4" font-style="italic">E<tspan font-size="5.2" dy="1.6">B</tspan></text>
<text x="667" y="283.4" font-size="7.4" font-style="italic">B</text>
<text x="694.7" y="289.3" font-size="6.8" text-anchor="middle">A1</text>
<text x="722.6" y="268.9" font-size="6.8" text-anchor="middle">V0</text>
<text x="718.4" y="280.5" font-size="7.2" font-style="italic">U<tspan font-size="5.4" dy="1.9" dx="0.6">B</tspan></text>
<text x="720.8" y="297.4" font-size="6.8" font-style="italic">Z<tspan font-size="5.4" dy="1.8" dx="0.2" font-style="normal">B</tspan></text>
<text x="673.3" y="297.7" font-size="7.4" font-style="italic">I<tspan font-size="5.2" dy="1.8" font-style="normal">B</tspan></text>
<text x="635.3" y="323.3" font-size="7.4" font-style="italic">E<tspan font-size="5.2" dy="1.6">C</tspan></text>
<text x="667" y="323.7" font-size="7.4" font-style="italic">C</text>
<text x="694.7" y="329.6" font-size="6.8" text-anchor="middle">A1</text>
<text x="722.6" y="309.2" font-size="6.8" text-anchor="middle">V0</text>
<text x="718.4" y="320.8" font-size="7.2" font-style="italic">U<tspan font-size="5.4" dy="1.9" dx="0.6">C</tspan></text>
<text x="720.8" y="337.7" font-size="6.8" font-style="italic">Z<tspan font-size="5.4" dy="1.8" dx="0.2" font-style="normal">C</tspan></text>
<text x="673.3" y="338.0" font-size="7.4" font-style="italic">I<tspan font-size="5.2" dy="1.8" font-style="normal">C</tspan></text>
<text x="741.3" y="353.4" font-size="6.8" text-anchor="middle">A1</text>
<text x="697.9" y="376.3" font-size="6.8" text-anchor="middle">V1</text>
<text x="666.8" y="347.6" font-size="7.4" font-style="italic">O</text>
<text x="703.2" y="345.8" font-size="7.4" font-style="italic">K</text>
<text x="723.4" y="347.6" font-size="7.4" font-style="italic">O′</text>
<text x="690.3" y="361.6" font-size="7.4" font-style="italic">U<tspan font-size="5" dy="1.6" font-style="normal">OO′</tspan></text>
<text x="757.5" y="364.5" font-size="7.4" font-style="italic">I<tspan font-size="5.2" dy="1.8" font-style="normal">N</tspan></text>
</g>
<!-- /FIG19C -->
  <!-- status bar -->
  <rect x="0" y="430" width="1000" height="14" fill="#f3f3f3"/>
  <g font-size="7.3" fill="#505050">
    <text x="4" y="439.8" textLength="49" lengthAdjust="spacingAndGlyphs">Страница 1 из 6</text>
    <text x="63.8" y="439.8" textLength="50.5" lengthAdjust="spacingAndGlyphs">Число слов: 363</text>
    <text x="143.8" y="439.8" textLength="55" lengthAdjust="spacingAndGlyphs">английский (США)</text>
  </g>
  <g fill="none" stroke="#707070" stroke-width="0.9">
    <path d="M125.6 432.9 H133.4 V439.3 H125.6Z M129.5 432.9 V439.8"/>
    <path d="M127.4 434.5 V438" stroke="#bbb" stroke-width="0.6"/>
    <path d="M130.6 438.6 L133.6 434.2" stroke-width="1.1"/>
  </g>
  <!-- view buttons -->
  <g fill="none" stroke="#6a6a6a" stroke-width="0.9">
    <path d="M829.5 432.8 H833.5 V439.6 H829.5Z M833.5 432.8 H837.5 V439.6 H833.5Z" stroke="#8a8a8a"/><path d="M831 434.5 H832.5 M831 436 H832.5 M834.5 434.5 H836 M834.5 436 H836" stroke="#bbb" stroke-width="0.6"/>
  </g>
  <rect x="845" y="430" width="21.5" height="14" fill="#c8c8c8"/>
  <g fill="none" stroke="#6a6a6a" stroke-width="0.9">
    <path d="M851.5 432.5 H859.5 V441 H851.5Z M851.5 435.3 H859.5 M851.5 438.1 H859.5"/>
    <path d="M873.5 432.5 H880.5 V440 H873.5Z M874 434 H880"/>
  </g>
  <circle cx="880.3" cy="439.3" r="1.8" fill="#f3f3f3" stroke="#6a6a6a" stroke-width="0.8"/>
  <rect x="891" y="436" width="5" height="1.2" fill="#555"/>
  <rect x="899" y="436.6" width="64" height="0.8" fill="#bdbdbd"/>
  <rect x="931" y="435" width="1" height="4" fill="#c8c8c8"/>
  <rect x="919" y="433" width="3.5" height="7" fill="#6a6a6a"/>
  <path d="M966 436.8 H971 M968.5 434.2 V439.4" stroke="#555" stroke-width="1.2"/>
  <text x="977.2" y="439.6" font-size="7" fill="#585858">70</text><text x="986.8" y="439.6" font-size="7" fill="#585858">%</text>
  <!-- taskbar -->
<!-- TASK -->
<defs><linearGradient id="tb" x1="0" y1="0" x2="1000" y2="0" gradientUnits="userSpaceOnUse">
<stop offset="0" stop-color="#292c2e"/><stop offset="0.18" stop-color="#2c2f31"/><stop offset="0.20" stop-color="#313533"/><stop offset="0.30" stop-color="#353937"/><stop offset="0.44" stop-color="#38393a"/><stop offset="0.475" stop-color="#33343a"/><stop offset="0.51" stop-color="#262a38"/><stop offset="0.53" stop-color="#2c2f3a"/><stop offset="0.57" stop-color="#3a3d40"/><stop offset="0.60" stop-color="#383b40"/><stop offset="0.64" stop-color="#23273a"/><stop offset="0.67" stop-color="#1c2030"/><stop offset="0.84" stop-color="#1d2130"/><stop offset="0.93" stop-color="#252935"/><stop offset="1" stop-color="#1f2330"/>
</linearGradient></defs>
<rect x="0" y="444" width="1000" height="20" fill="url(#tb)"/>
<!-- windows logo -->
<g fill="#fff">
  <path d="M6.2 449.6 L10.8 449 V453.4 H6.2Z M11.6 448.9 L17 448.2 V453.4 H11.6Z M6.2 454.2 H10.8 V458.6 L6.2 458Z M11.6 454.2 H17 V459.4 L11.6 458.7Z"/>
</g>
<!-- search -->
<g fill="none" stroke="#e8e8e8" stroke-width="1">
  <circle cx="37.2" cy="452.6" r="3.4"/>
  <path d="M34.8 455 L30.2 459.3"/>
</g>
<!-- edge -->
<path d="M57.4 451.6 C58.6 449.2 61.8 448.6 63.8 450 C65.4 451.1 65.6 453 65.4 454.6 H59.4 C59.5 456.6 61.8 457.6 64.6 456.6 V458.3 C60.6 459.6 56.8 458 56.8 454.6 C56.8 453.4 57.1 452.4 57.4 451.6Z M59.5 453 H62.9 C62.9 451.6 62.1 451 61.2 451 C60.2 451 59.6 451.8 59.5 453Z" fill="#1e8de8"/>
<!-- store -->
<path d="M82 450.5 V449.6 C82 448.2 86.2 448.2 86.2 449.6 V450.5" fill="none" stroke="#eee" stroke-width="0.9"/>
<rect x="79.2" y="450.5" width="10" height="8.4" fill="#f5f5f5"/>
<rect x="81.6" y="452" width="2.3" height="2.3" fill="#f25022"/>
<rect x="84.4" y="452" width="2.3" height="2.3" fill="#7fba00"/>
<rect x="81.6" y="454.8" width="2.3" height="2.3" fill="#00a4ef"/>
<rect x="84.4" y="454.8" width="2.3" height="2.3" fill="#ffb900"/>
<!-- explorer -->
<path d="M103.2 450 H107 L108 451 H113 V458.4 H103.2Z" fill="#f5c846"/>
<rect x="103.2" y="452.3" width="9.8" height="6.1" fill="#ffd968"/>
<rect x="105.8" y="454.3" width="4.6" height="1" fill="#3d8fd6"/>
<rect x="105.8" y="454.3" width="1" height="3.2" fill="#3d8fd6"/>
<rect x="109.4" y="454.3" width="1" height="3.2" fill="#3d8fd6"/>
<rect x="99" y="462" width="14.5" height="2" fill="#76b9ed"/>
<rect x="114.2" y="462" width="3.8" height="2" fill="#5a8fb8"/>
<!-- chrome -->
<circle cx="132.2" cy="454" r="5" fill="#db4437"/>
<path d="M132.2 454 L127.9 456.5 A5 5 0 0 0 134.7 458.3Z" fill="#0f9d58"/>
<path d="M132.2 454 L134.7 458.3 A5 5 0 0 0 137 452.7 L132.2 452.7Z" fill="#ffcd40"/>
<path d="M132.2 449 A5 5 0 0 1 136.6 451.5 H132.2Z" fill="#db4437"/>
<circle cx="132.2" cy="454" r="2.3" fill="#fff"/>
<circle cx="132.2" cy="454" r="1.7" fill="#4285f4"/>
<!-- yandex -->
<circle cx="155.6" cy="454" r="5" fill="#f2f2f2"/>
<path d="M153 450.6 L155.6 454.5 L158.2 450.6 M155.6 454.5 V458" fill="none" stroke="#e61400" stroke-width="1.3"/>
<rect x="147" y="462" width="18.5" height="2" fill="#76b9ed"/>
<!-- word -->
<rect x="169" y="444" width="23" height="20" fill="#4a4c4f"/>
<rect x="178" y="449" width="7.5" height="9.5" fill="#41a5ee"/>
<rect x="178" y="454" width="7.5" height="4.5" fill="#185abd"/>
<rect x="174.8" y="451.2" width="6.6" height="6.4" fill="#1e55b3"/>
<text x="178.1" y="456.4" font-family="Liberation Sans, sans-serif" font-size="5" font-weight="bold" fill="#fff" text-anchor="middle">W</text>
<rect x="169" y="462" width="23" height="2" fill="#76b9ed"/>
<!-- tray -->
<path d="M857.3 456.4 L861.2 452.6 L865.1 456.4" fill="none" stroke="#eee" stroke-width="1"/>
<rect x="872.3" y="451.8" width="9" height="5.3" fill="none" stroke="#ddd" stroke-width="0.9"/>
<rect x="873.3" y="452.8" width="5" height="3.3" fill="#fff"/>
<rect x="881.5" y="453.4" width="0.9" height="2.1" fill="#ddd"/>
<g fill="none" stroke="#cfcfcf" stroke-width="0.8">
  <path d="M889 457.5 A8 8 0 0 1 897 449.5 M890.8 457.5 A6.2 6.2 0 0 1 897 451.3 M892.6 457.5 A4.4 4.4 0 0 1 897 453.1 M894.4 457.5 A2.6 2.6 0 0 1 897 454.9"/>
</g>
<circle cx="897" cy="457.6" r="0.7" fill="#fff"/>
<path d="M902.5 452.6 H904.3 L906.8 450.3 V458.7 L904.3 456.4 H902.5Z" fill="none" stroke="#ddd" stroke-width="0.8"/>
<path d="M908.6 452.4 Q909.6 454.5 908.6 456.6 M910.3 451.2 Q912 454.5 910.3 457.8" fill="none" stroke="#ccc" stroke-width="0.8"/>
<text x="921" y="457.6" font-family="Liberation Sans, sans-serif" font-size="7.6" fill="#f2f2f2" textLength="13" lengthAdjust="spacingAndGlyphs">РУС</text>
<text x="943.5" y="457.6" font-family="Liberation Sans, sans-serif" font-size="7.6" fill="#f2f2f2" textLength="18" lengthAdjust="spacingAndGlyphs">12:54</text>
<path d="M973.2 448.8 H984.2 V457.6 H980 L978.2 460.3 L976.9 457.6 H973.2Z" fill="#fff"/>
<path d="M975 451.2 H982.4 M975 453.1 H982.4 M975 455 H980" stroke="#212428" stroke-width="0.8"/>
<rect x="997.5" y="444" width="2.5" height="20" fill="#2a2e33"/>
<rect x="997" y="444" width="0.6" height="20" fill="#555"/>

<!-- /TASK -->
</svg>
</body></html>
